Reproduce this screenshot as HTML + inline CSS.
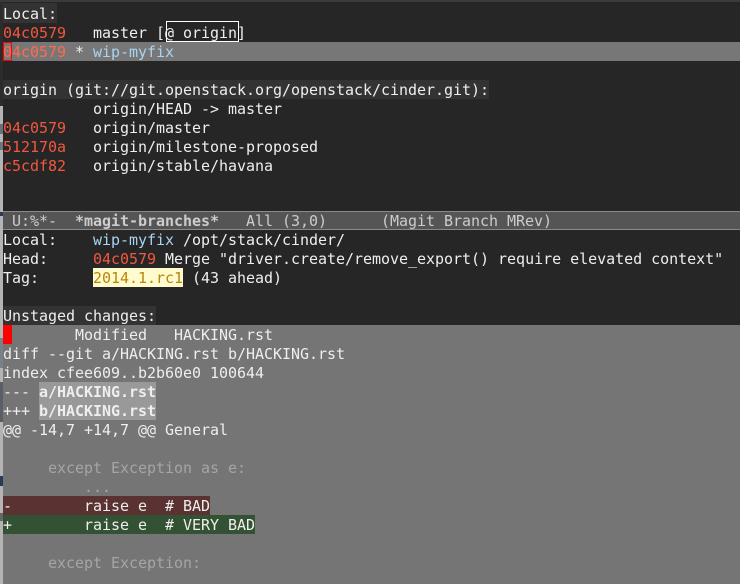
<!DOCTYPE html>
<html>
<head>
<meta charset="utf-8">
<style>
html,body{margin:0;padding:0;width:740px;height:584px;overflow:hidden;background:#262626}
#a{position:relative;width:740px;height:584px;overflow:hidden;background:#262626;font:15px/19px "DejaVu Sans Mono",monospace;color:#eeeeec;letter-spacing:-.03px}
.l,.b{position:absolute}
.l{left:3px;height:19px;white-space:pre;margin-top:1px}
.r{color:#f4573f}
.h{color:#ff6a50}
.u{color:#a9d3f2}
.f{color:#a5a5a5}
b{font-weight:bold}
</style>
</head>
<body>
<div id="a">
<div class="b" style="left:0;top:0;width:740px;height:2px;background:#3c3b37"></div>
<div class="b" style="left:0;top:2px;width:3px;height:104px;background:#2c2c2c"></div>
<div class="b" style="left:0;top:106px;width:3px;height:478px;background:#b4b4b4"></div>
<div class="b" style="left:0;top:124px;width:3px;height:10px;background:#6a7078"></div>
<div class="b" style="left:0;top:142px;width:3px;height:8px;background:#70767c"></div>
<div class="b" style="left:0;top:212px;width:3px;height:4px;background:#2a3a55"></div>
<div class="b" style="left:0;top:338px;width:3px;height:30px;background:#7a8088"></div>
<div class="b" style="left:0;top:382px;width:3px;height:40px;background:#5a5f66"></div>
<div class="b" style="left:0;top:476px;width:3px;height:10px;background:#2a3a55"></div>
<div class="b" style="left:0;top:513px;width:3px;height:8px;background:#666"></div>

<div class="b" style="left:3px;top:42px;width:737px;height:19px;background:#777"></div>
<div class="b" style="left:3px;top:3px;width:54px;height:20px;background:#333"></div>
<div class="b" style="left:3px;top:80px;width:486px;height:19px;background:#333"></div>
<div class="b" style="left:166px;top:21px;width:71px;height:19px;border:1px solid #fff"></div>
<div class="b" style="left:3px;top:42px;width:7px;height:17px;border:1px solid #f00"></div>

<div class="l" style="top:4px">Local:</div>
<div class="l" style="top:23px"><span class="r">04c0579</span>   master [@ origin]</div>
<div class="l" style="top:42px"><span class="h">04c0579</span> * <span class="u">wip-myfix</span></div>
<div class="l" style="top:80px;left:3px">origin (git://git.openstack.org/openstack/cinder.git):</div>
<div class="l" style="top:99px">          origin/HEAD -&gt; master</div>
<div class="l" style="top:118px"><span class="r">04c0579</span>   origin/master</div>
<div class="l" style="top:137px"><span class="r">512170a</span>   origin/milestone-proposed</div>
<div class="l" style="top:156px"><span class="r">c5cdf82</span>   origin/stable/havana</div>

<div class="b" style="left:3px;top:211px;width:737px;height:19px;background:#555;border-top:1px solid #8a8a8a;border-bottom:1px solid #8a8a8a;box-sizing:border-box"></div>
<div class="l" style="top:211px;color:#ccc"> U:%*-  <b>*magit-branches*</b>   All (3,0)      (Magit Branch MRev)</div>

<div class="l" style="top:230px">Local:    <span class="u">wip-myfix</span> /opt/stack/cinder/</div>
<div class="l" style="top:249px">Head:     <span class="r">04c0579</span> Merge "driver.create/remove_export() require elevated context"</div>
<div class="b" style="left:93px;top:268px;width:90px;height:19px;background:#fffbcc"></div>
<div class="l" style="top:268px">Tag:      <span style="color:#b8860b">2014.1.rc1</span> (43 ahead)</div>
<div class="b" style="left:3px;top:306px;width:153px;height:19px;background:#333"></div>
<div class="l" style="top:306px">Unstaged changes:</div>

<div class="b" style="left:3px;top:325px;width:737px;height:259px;background:#757575"></div>
<div class="b" style="left:3px;top:325px;width:9px;height:19px;background:#f00"></div>
<div class="b" style="left:39px;top:382px;width:117px;height:38px;background:#999"></div>
<div class="b" style="left:3px;top:496px;width:207px;height:19px;background:#5a3232"></div>
<div class="b" style="left:3px;top:515px;width:252px;height:19px;background:#335233"></div>

<div class="l" style="top:325px">        Modified   HACKING.rst</div>
<div class="l" style="top:344px">diff --git a/HACKING.rst b/HACKING.rst</div>
<div class="l" style="top:363px">index cfee609..b2b60e0 100644</div>
<div class="l" style="top:382px">--- <b>a/HACKING.rst</b></div>
<div class="l" style="top:401px">+++ <b>b/HACKING.rst</b></div>
<div class="l" style="top:420px">@@ -14,7 +14,7 @@ General</div>
<div class="l f" style="top:458px">     except Exception as e:</div>
<div class="l f" style="top:477px">         ...</div>
<div class="l" style="top:496px">-        raise e  # BAD</div>
<div class="l" style="top:515px">+        raise e  # VERY BAD</div>
<div class="l f" style="top:553px">     except Exception:</div>
</div>
</body>
</html>
